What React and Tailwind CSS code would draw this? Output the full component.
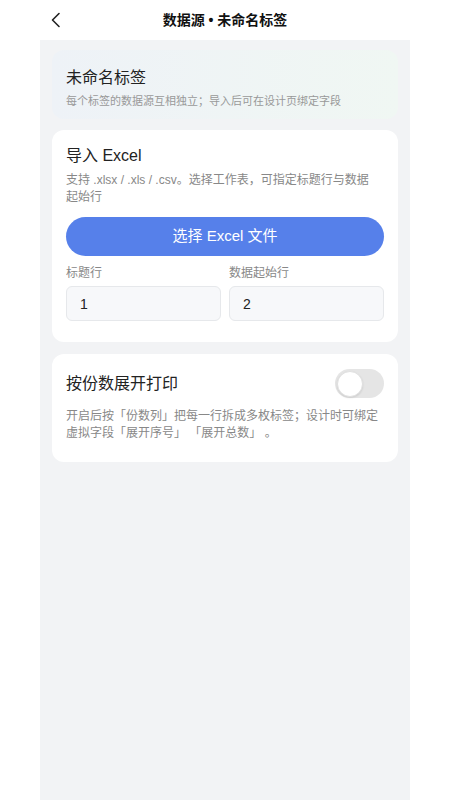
import { useState } from "react";

const FONT = { fontFamily: '"Liberation Sans", "Noto Sans CJK SC", sans-serif' };

const BackIcon = () => (
  <svg width="12" height="16" viewBox="0 0 12 16" fill="none">
    <path d="M9 1.5 L2.5 8 L9 14.5" stroke="#222" strokeWidth="1.6" strokeLinecap="round" strokeLinejoin="round" />
  </svg>
);

const Toggle = ({ on, onChange }) => (
  <button
    onClick={() => onChange(!on)}
    className={`relative w-[49px] h-[29px] rounded-full shrink-0 ${on ? "bg-[#5680ea]" : "bg-[#e5e5e5]"}`}
  >
    <span
      className={`absolute top-[1.5px] w-[26px] h-[26px] rounded-full bg-white border border-[#e0e0e0] shadow-[0_1px_2px_rgba(0,0,0,0.1)] ${
        on ? "left-[21.5px]" : "left-[1.5px]"
      }`}
    ></span>
  </button>
);

const NumberField = ({ label, value, onChange }) => (
  <div className="flex-1 min-w-0">
    <div className="text-[12px] leading-[16px] text-[#888]">{label}</div>
    <input
      className="mt-[5px] w-full h-[35px] rounded-md border border-[#e6e8eb] bg-[#f7f8fa] px-[13px] text-[14px] text-[#222] outline-none"
      value={value}
      onChange={(e) => onChange(e.target.value)}
    />
  </div>
);

export default function App() {
  const [headerRow, setHeaderRow] = useState("1");
  const [dataRow, setDataRow] = useState("2");
  const [expand, setExpand] = useState(false);

  return (
    <div className="w-[450px] h-[800px] bg-white flex flex-col" style={FONT}>
      <div className="h-[40px] shrink-0 relative flex items-center justify-center">
        <button className="absolute left-[50px] top-[12px]">
          <BackIcon />
        </button>
        <div className="text-[14px] font-bold text-[#111]">数据源 • 未命名标签</div>
      </div>

      <div className="flex-1 mx-[40px] bg-[#f2f3f5] px-3 pt-[10px] flex flex-col gap-[11px]">
        {/* label summary */}
        <div className="rounded-xl bg-gradient-to-r from-[#eef2f7] to-[#f0f7f3] px-[14px] pt-[16px] pb-[10px]">
          <div className="text-[16px] leading-[24px] text-[#222]">未命名标签</div>
          <div className="text-[11px] leading-[16px] text-[#999] mt-[3px]">每个标签的数据源互相独立；导入后可在设计页绑定字段</div>
        </div>

        {/* excel import */}
        <div className="rounded-xl bg-white px-[14px] pt-[14px] pb-[21px]">
          <div className="text-[16px] leading-[24px] text-[#222]">导入 Excel</div>
          <div className="text-[12px] leading-[17px] text-[#888] mt-[4px]">
            支持 .xlsx / .xls / .csv。选择工作表，可指定标题行与数据
            <br />
            起始行
          </div>
          <button className="mt-[11px] w-full h-[39px] rounded-full bg-[#5680ea] text-white text-[15px]">
            选择 Excel 文件
          </button>
          <div className="mt-[9px] flex gap-2">
            <NumberField label="标题行" value={headerRow} onChange={setHeaderRow} />
            <NumberField label="数据起始行" value={dataRow} onChange={setDataRow} />
          </div>
        </div>

        {/* expand print */}
        <div className="rounded-xl bg-white px-[14px] pt-[15px] pb-[20px] mt-[1px]">
          <div className="flex items-center justify-between">
            <div className="text-[16px] text-[#222]">按份数展开打印</div>
            <Toggle on={expand} onChange={setExpand} />
          </div>
          <div className="text-[12px] leading-[17px] text-[#888] mt-[10px]">
            开启后按「份数列」把每一行拆成多枚标签；设计时可绑定虚拟字段「展开序号」 「展开总数」 。
          </div>
        </div>
      </div>
    </div>
  );
}
